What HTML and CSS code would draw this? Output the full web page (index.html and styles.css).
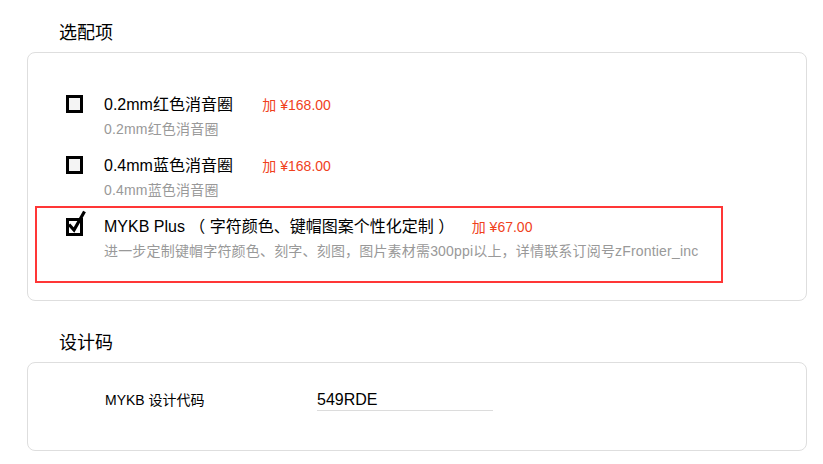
FILE: index.html
```html
<!DOCTYPE html>
<html lang="zh-CN">
<head>
    <meta charset="UTF-8">
    <meta name="viewport" content="width=device-width, initial-scale=1.0">
    <title>选配项</title>
    <link rel="stylesheet" href="styles.css">
</head>
<body>
    <section class="block">
        <h2 class="block-title">选配项</h2>
        <div class="card card-options">
            <div class="option">
                <span class="check"></span>
                <div class="option-text">
                    <div class="option-head">
                        <span class="option-name">0.2mm红色消音圈</span>
                        <span class="option-price">加 ¥168.00</span>
                    </div>
                    <div class="option-desc">0.2mm红色消音圈</div>
                </div>
            </div>
            <div class="option">
                <span class="check"></span>
                <div class="option-text">
                    <div class="option-head">
                        <span class="option-name">0.4mm蓝色消音圈</span>
                        <span class="option-price">加 ¥168.00</span>
                    </div>
                    <div class="option-desc">0.4mm蓝色消音圈</div>
                </div>
            </div>
            <div class="option option-marked">
                <span class="check checked">
                    <svg class="tick" width="17" height="18" viewBox="0 0 17 18">
                        <polyline points="3,6.5 8,12 18.5,-6.5" fill="none" stroke="#000" stroke-width="3.2"/>
                    </svg>
                </span>
                <div class="option-text">
                    <div class="option-head">
                        <span class="option-name">MYKB Plus （ 字符颜色、键帽图案个性化定制 ）</span>
                        <span class="option-price price-tight">加 ¥67.00</span>
                    </div>
                    <div class="option-desc">进一步定制键帽字符颜色、刻字、刻图，图片素材需300ppi以上，详情联系订阅号zFrontier_inc</div>
                </div>
            </div>
        </div>
    </section>

    <section class="block block-code">
        <h2 class="block-title">设计码</h2>
        <div class="card card-code">
            <label class="code-label" for="designCode">MYKB 设计代码</label>
            <input class="code-input" id="designCode" type="text" value="549RDE">
        </div>
    </section>
</body>
</html>
```

FILE: styles.css
```css
body {
    margin: 0;
    padding: 0;
    background: #fff;
    color: #000;
    font-family: "Liberation Sans", "Noto Sans CJK SC", sans-serif;
}

.block {
    margin: 0 16px 0 27px;
}

.block-title {
    margin: 0;
    padding: 21px 0 0 32px;
    font-size: 18px;
    line-height: 24px;
    font-weight: normal;
}

.block-code .block-title {
    padding-top: 30px;
}

.card {
    margin-top: 7px;
    border: 1px solid #dedede;
    border-radius: 8px;
}

/* options card */
.card-options {
    display: flex;
    flex-direction: column;
    gap: 16px;
    padding: 41px 0 17px 38px;
}

.option {
    display: flex;
    align-items: flex-start;
    gap: 21px;
}

.option-marked {
    width: 655px;
    margin: -10px 0 0 -31px;
    padding: 8px 0 20px 29px;
    border: 2px solid #ff3636;
}

.check {
    position: relative;
    flex: none;
    box-sizing: border-box;
    width: 17px;
    height: 18px;
    margin-top: 1px;
    border: 3px solid #000;
    background: #f4f4f4;
}

.check.checked {
    background: #fff;
    margin-top: 2px;
}

.tick {
    position: absolute;
    left: -3px;
    top: -3px;
    overflow: visible;
}

.option-head {
    line-height: 22px;
    white-space: nowrap;
}

.option-name {
    font-size: 16px;
}

.option-price {
    margin-left: 25px;
    font-size: 14px;
    color: #f0411c;
}

.price-tight {
    margin-left: 13px;
}

.option-desc {
    margin-top: 3px;
    font-size: 14px;
    line-height: 20px;
    letter-spacing: 0.18px;
    color: #999;
    white-space: nowrap;
}

/* design code card */
.card-code {
    display: flex;
    align-items: flex-start;
    padding: 27px 0 39px 77px;
}

.code-label {
    width: 212px;
    font-size: 14px;
    line-height: 20px;
}

.code-input {
    width: 176px;
    height: 20px;
    padding: 0;
    border: none;
    border-bottom: 1px solid #dcdcdc;
    outline: none;
    font-family: "Liberation Sans", "Noto Sans CJK SC", sans-serif;
    font-size: 16px;
    line-height: 20px;
    color: #000;
    background: transparent;
}
```
